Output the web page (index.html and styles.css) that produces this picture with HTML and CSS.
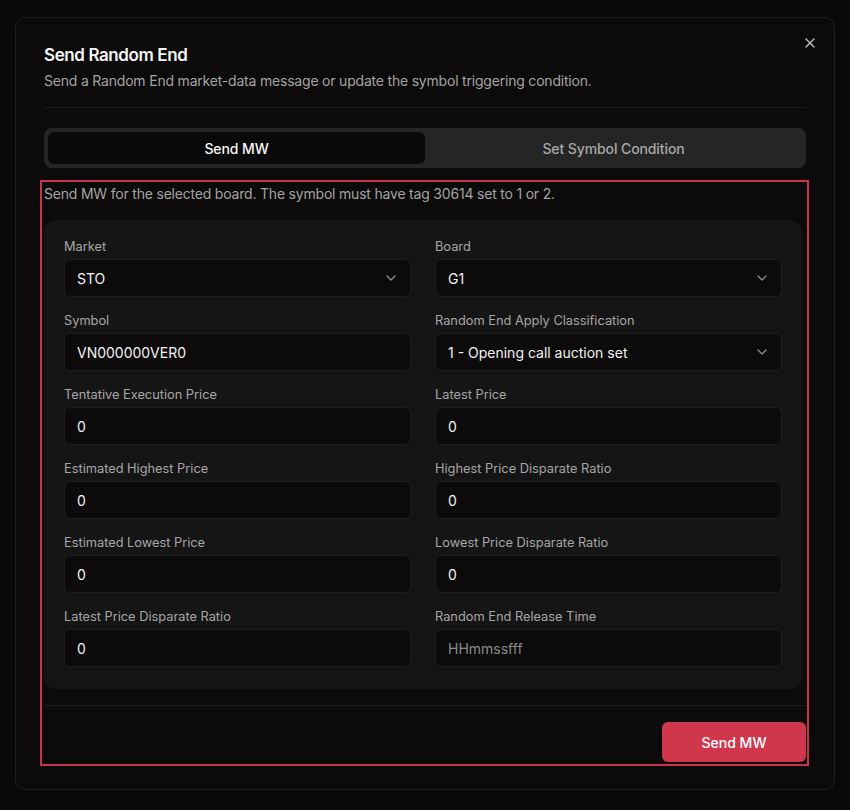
FILE: index.html
```html
<!DOCTYPE html>
<html lang="en">
<head>
    <meta charset="UTF-8">
    <meta name="viewport" content="width=device-width, initial-scale=1.0">
    <title>Send Random End</title>
    <link rel="stylesheet" href="styles.css">
</head>
<body>
    <div class="dialog">
        <button class="close-btn" aria-label="Close">
            <svg width="16" height="16" viewBox="0 0 24 24" fill="none" stroke="currentColor" stroke-width="2" stroke-linecap="round"><path d="M18 6 6 18"/><path d="m6 6 12 12"/></svg>
        </button>
        <div class="dialog-header">
            <h2>Send Random End</h2>
            <p>Send a Random End market-data message or update the symbol triggering condition.</p>
        </div>
        <div class="divider"></div>

        <div class="tabs">
            <button class="tab active">Send MW</button>
            <button class="tab">Set Symbol Condition</button>
        </div>

        <div class="tab-panel">
            <p class="hint">Send MW for the selected board. The symbol must have tag 30614 set to 1 or 2.</p>
            <div class="form-card">
                <div class="field">
                    <label>Market</label>
                    <div class="select">STO
                        <svg width="16" height="16" viewBox="0 0 24 24" fill="none" stroke="currentColor" stroke-width="2" stroke-linecap="round" stroke-linejoin="round"><path d="m6 9 6 6 6-6"/></svg>
                    </div>
                </div>
                <div class="field">
                    <label>Board</label>
                    <div class="select">G1
                        <svg width="16" height="16" viewBox="0 0 24 24" fill="none" stroke="currentColor" stroke-width="2" stroke-linecap="round" stroke-linejoin="round"><path d="m6 9 6 6 6-6"/></svg>
                    </div>
                </div>
                <div class="field">
                    <label>Symbol</label>
                    <input type="text" value="VN000000VER0">
                </div>
                <div class="field">
                    <label>Random End Apply Classification</label>
                    <div class="select">1 - Opening call auction set
                        <svg width="16" height="16" viewBox="0 0 24 24" fill="none" stroke="currentColor" stroke-width="2" stroke-linecap="round" stroke-linejoin="round"><path d="m6 9 6 6 6-6"/></svg>
                    </div>
                </div>
                <div class="field">
                    <label>Tentative Execution Price</label>
                    <input type="text" value="0">
                </div>
                <div class="field">
                    <label>Latest Price</label>
                    <input type="text" value="0">
                </div>
                <div class="field">
                    <label>Estimated Highest Price</label>
                    <input type="text" value="0">
                </div>
                <div class="field">
                    <label>Highest Price Disparate Ratio</label>
                    <input type="text" value="0">
                </div>
                <div class="field">
                    <label>Estimated Lowest Price</label>
                    <input type="text" value="0">
                </div>
                <div class="field">
                    <label>Lowest Price Disparate Ratio</label>
                    <input type="text" value="0">
                </div>
                <div class="field">
                    <label>Latest Price Disparate Ratio</label>
                    <input type="text" value="0">
                </div>
                <div class="field">
                    <label>Random End Release Time</label>
                    <input type="text" placeholder="HHmmssfff">
                </div>
            </div>
            <div class="divider footer-divider"></div>
            <div class="footer">
                <button class="btn-primary">Send MW</button>
            </div>
        </div>
    </div>
</body>
</html>
```

FILE: styles.css
```css
body {
    font-family: Inter, 'Noto Sans', sans-serif;
    background-color: #0a0909;
    color: #f5f5f5;
    margin: 0;
    height: 810px;
    overflow: hidden;
}
.dialog {
    position: relative;
    box-sizing: border-box;
    width: 820px;
    margin: 17px 0 0 15px;
    padding: 23px 28px 23px 28px;
    background: #0c0a0a;
    border: 1px solid #1f1e1e;
    border-radius: 10px;
}
.close-btn {
    position: absolute;
    top: 17px;
    right: 16px;
    background: none;
    border: none;
    padding: 0;
    color: #bdbdbd;
    cursor: pointer;
}
.dialog-header h2 {
    margin: 0;
    font-size: 17px;
    line-height: 28px;
    font-weight: 600;
    letter-spacing: -0.4px;
}
.dialog-header p {
    margin: 2px 0 0;
    font-size: 14px;
    line-height: 20px;
    color: #a3a3a3;
    letter-spacing: -0.2px;
}
.divider {
    height: 1px;
    background: #1c1b1b;
    margin-top: 16px;
}
.tabs {
    display: flex;
    margin-top: 20px;
    padding: 4px;
    height: 32px;
    background: #262525;
    border-radius: 8px;
}
.tab {
    flex: 1;
    background: none;
    border: none;
    border-radius: 6px;
    font-family: inherit;
    font-size: 14px;
    font-weight: 500;
    color: #a8a8a8;
    letter-spacing: -0.1px;
}
.tab.active {
    background: #0a0909;
    color: #f5f5f5;
}
.tab-panel {
    margin: 12px -3px 0 -4px;
    padding: 2px 1px 1px 2px;
    border: 2px solid #c8354b;
}
.hint {
    margin: 0;
    font-size: 14px;
    line-height: 20px;
    color: #a3a3a3;
    letter-spacing: -0.2px;
}
.form-card {
    display: grid;
    grid-template-columns: 1fr 1fr;
    column-gap: 24px;
    row-gap: 16px;
    margin: 16px 4px 0 0;
    padding: 19px 20px 22px;
    background: #161515;
    border-radius: 12px;
}
.field label {
    display: block;
    font-size: 12.8px;
    line-height: 16px;
    color: #a6a6a6;
    margin-bottom: 4px;
}
.field input, .select {
    box-sizing: border-box;
    width: 100%;
    height: 38px;
    padding: 0 12px;
    background: #0c0a0a;
    border: 1px solid #1f1e1e;
    border-radius: 6px;
    font-family: inherit;
    font-size: 14px;
    color: #f2f2f2;
    outline: none;
}
.field input::placeholder {
    color: #8a8a8a;
}
.select {
    display: flex;
    align-items: center;
    justify-content: space-between;
}
.select svg {
    color: #8c8c8c;
    margin-right: -1px;
}
.footer-divider {
    margin-top: 16px;
}
.footer {
    display: flex;
    justify-content: flex-end;
    padding: 16px 0 1px;
}
.btn-primary {
    width: 144px;
    height: 40px;
    background: #d0374d;
    border: none;
    border-radius: 6px;
    color: #fff;
    font-family: inherit;
    font-size: 14px;
    font-weight: 500;
    cursor: pointer;
}
```
